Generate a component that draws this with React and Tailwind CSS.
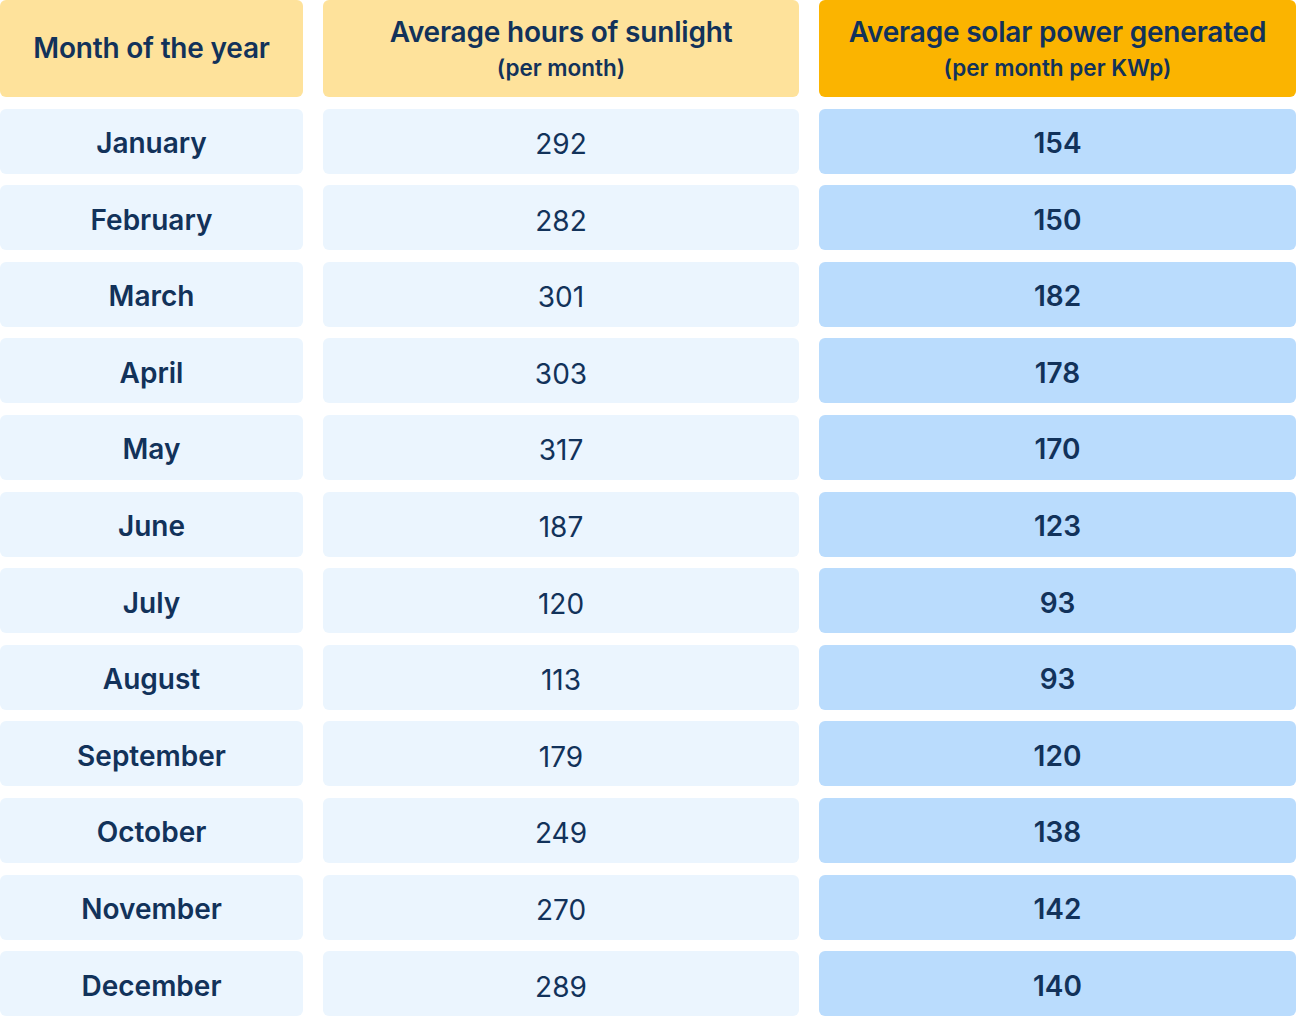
import React from "react";

const rows = [
  ["January", 292, 154],
  ["February", 282, 150],
  ["March", 301, 182],
  ["April", 303, 178],
  ["May", 317, 170],
  ["June", 187, 123],
  ["July", 120, 93],
  ["August", 113, 93],
  ["September", 179, 120],
  ["October", 249, 138],
  ["November", 270, 142],
  ["December", 289, 140],
];

export default function App() {
  return (
    <div
      className="w-[1296px] h-[1017px] bg-white text-[#12325a] grid grid-cols-[303px_476px_477px] gap-x-[20px] gap-y-[11.6px] content-start"
      style={{ fontFamily: "Inter, 'Noto Sans', sans-serif" }}
    >
      <div className="h-[97px] rounded-md bg-[#fee29b] flex items-center justify-center">
        <span className="text-[28px] font-semibold tracking-[-0.2px] pb-[2px]">Month of the year</span>
      </div>
      <div className="h-[97px] rounded-md bg-[#fee29b] flex flex-col items-center justify-start pt-[14px]">
        <span className="text-[28px] font-semibold tracking-[-0.2px] leading-[36px]">Average hours of sunlight</span>
        <span className="text-[22.5px] font-semibold leading-[24px] mt-[6px]">(per month)</span>
      </div>
      <div className="h-[97px] rounded-md bg-[#fbb400] flex flex-col items-center justify-start pt-[14px]">
        <span className="text-[28px] font-semibold tracking-[-0.2px] leading-[36px]">Average solar power generated</span>
        <span className="text-[22.5px] font-semibold leading-[24px] mt-[6px]">(per month per KWp)</span>
      </div>
      {rows.map(([month, hours, power]) => (
        <React.Fragment key={month}>
          <div className="h-[65px] rounded-md bg-[#ebf5fe] flex items-center justify-center pt-[4px]">
            <span className="text-[28px] font-semibold">{month}</span>
          </div>
          <div className="h-[65px] rounded-md bg-[#ebf5fe] flex items-center justify-center pt-[6px]">
            <span className="text-[28px] font-normal">{hours}</span>
          </div>
          <div className="h-[65px] rounded-md bg-[#badcfd] flex items-center justify-center pt-[4px]">
            <span className="text-[28px] font-semibold">{power}</span>
          </div>
        </React.Fragment>
      ))}
    </div>
  );
}
